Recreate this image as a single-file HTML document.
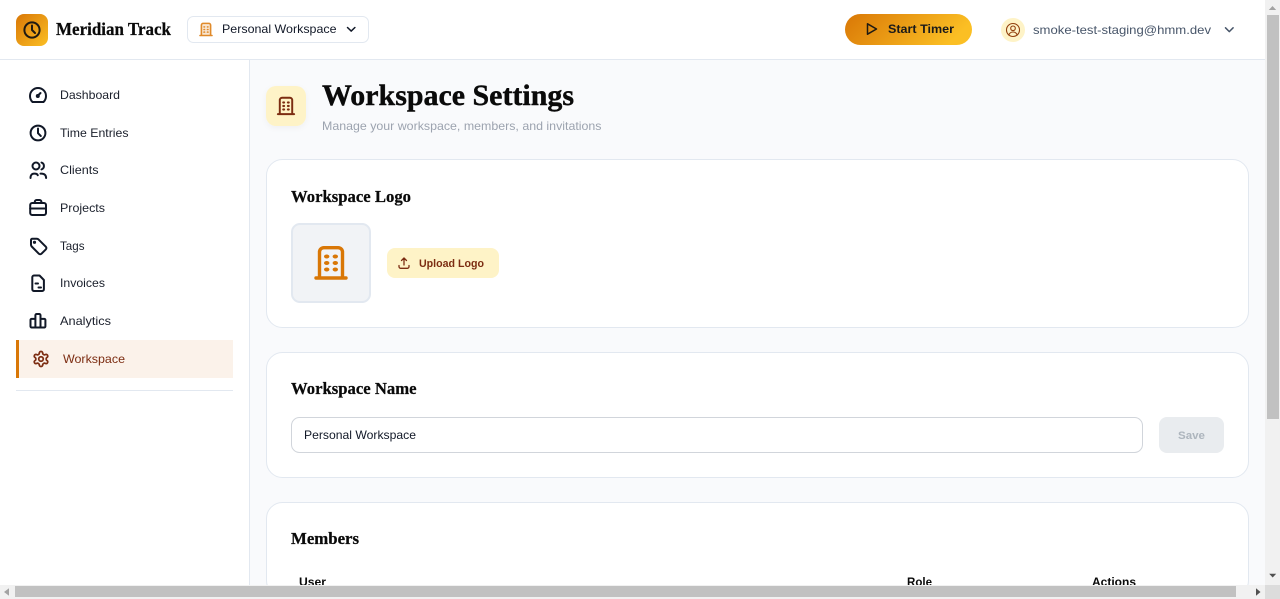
<!DOCTYPE html>
<html lang="en"><head><meta charset="utf-8"><title>Workspace Settings</title>
<style>
html,body{margin:0;padding:0;width:1280px;height:599px;overflow:hidden;background:#f9fafc}
svg{position:absolute;left:0;top:0;display:block}
.s{font-family:"Liberation Sans",sans-serif}
.f{font-family:"Liberation Serif",serif;font-weight:700;fill:#0a0a0a;stroke:#0a0a0a;stroke-width:.25px}
.n{font-size:12px;fill:#1a1f2b}
.i{fill:none;stroke:#111827;stroke-width:2;stroke-linecap:round;stroke-linejoin:round}
</style></head><body>
<svg width="1280" height="599" viewBox="0 0 1280 599" xmlns="http://www.w3.org/2000/svg">
<defs>
<linearGradient id="g" x1="0" y1="0" x2="1" y2="1"><stop offset="0" stop-color="#d97706"/><stop offset="1" stop-color="#fbbf24"/></linearGradient>
<linearGradient id="g2" x1="0" y1="0" x2="1" y2=".25"><stop offset="0" stop-color="#d97706"/><stop offset="1" stop-color="#fbbf24"/></linearGradient>
<g id="b"><path d="M-11.500 15V-11a4.300 4.300 0 0 1 4.300-4.300H7.200a4.300 4.300 0 0 1 4.300 4.300V15" style="fill:var(--f,none);stroke:currentColor;stroke-width:var(--w,3.400)"/><path d="M-15 15H15" style="fill:none;stroke:currentColor;stroke-width:var(--w,3.400);stroke-linecap:round"/><g fill="currentColor"><ellipse cx="-4.300" cy="-6.500" rx="2.700" ry="2"/><ellipse cx="4.300" cy="-6.500" rx="2.700" ry="2"/><ellipse cx="-4.300" cy="0" rx="2.700" ry="2"/><ellipse cx="4.300" cy="0" rx="2.700" ry="2"/><ellipse cx="-4.300" cy="6.500" rx="2.700" ry="2"/><ellipse cx="4.300" cy="6.500" rx="2.700" ry="2"/></g></g>
<filter id="sh" x="-30%" y="-30%" width="160%" height="160%"><feDropShadow dx="0" dy="2" stdDeviation="3" flood-color="#000" flood-opacity=".04"/></filter>
</defs>

<rect width="1280" height="599" fill="#f9fafc"/>
<!-- header -->
<rect width="1265" height="59" fill="#fff"/><rect y="59" width="1265" height="1" fill="#e2e8f0"/>
<!-- sidebar -->
<rect y="60" width="249" height="530" fill="#fff"/><rect x="249" y="60" width="1" height="530" fill="#e2e8f0"/>

<!-- logo -->
<rect x="16" y="14" width="32" height="32" rx="8" fill="url(#g)"/>
<circle cx="32" cy="30" r="7.600" class="i" style="stroke:#1f1a12"/><path d="M32 25.500V30l3 3" class="i" style="stroke:#1f1a12"/>
<text x="56" y="35" class="f" font-size="18" textLength="115" lengthAdjust="spacingAndGlyphs">Meridian Track</text>
<!-- selector -->
<rect x="187.500" y="16.500" width="181" height="26" rx="6" fill="#fff" stroke="#e2e8f0"/>
<use href="#b" transform="translate(206 29.500) scale(.4)" style="color:#e08a2a;--w:4;--f:rgba(217,119,6,.18)"/>
<text x="222" y="33" class="s" font-size="12" fill="#111827" textLength="114.500" lengthAdjust="spacingAndGlyphs">Personal Workspace</text>
<path d="M347.500 27.500l3.700 3.600 3.700-3.600" class="i" style="stroke-width:1.500"/>
<!-- timer -->
<rect x="845" y="14" width="127" height="31" rx="15.500" fill="url(#g2)"/>
<path d="M867.500 23.800v10.400l9-5.200z" class="i" style="stroke:#1f1a12;stroke-width:1.500"/>
<text x="888" y="33" class="s" font-size="12" font-weight="700" fill="#1a1a1a" textLength="66" lengthAdjust="spacingAndGlyphs">Start Timer</text>
<!-- user -->
<circle cx="1013" cy="30" r="12" fill="#fef3c7"/>
<g class="i" style="stroke:#92400e;stroke-width:1.100"><circle cx="1013" cy="30" r="6.500"/><circle cx="1013" cy="28.300" r="2.300"/><path d="M1008.800 35c.8-2 2.400-3 4.200-3s3.400 1 4.200 3"/></g>
<text x="1033" y="34" class="s" font-size="12" fill="#475569" textLength="178" lengthAdjust="spacingAndGlyphs">smoke-test-staging@hmm.dev</text>
<path d="M1225.500 27.800l3.800 3.800 3.800-3.800" class="i" style="stroke:#475569;stroke-width:1.500"/>

<!-- nav -->
<g class="i">
<path d="M32.500 102c-1.600-1.500-2.500-3.700-2.500-6 0-4.500 3.600-8 8-8s8 3.500 8 8c0 2.300-.9 4.500-2.500 6z"/><circle cx="37.800" cy="96" r="1"/><path d="M38.500 95l2-2"/>
<circle cx="38" cy="133" r="7.400"/><path d="M38 128.500v4.700l2.800 2.800"/>
<circle cx="36" cy="166" r="3.500"/><path d="M30.500 178c0-2.800 1.400-4.400 3.500-4.400h.8c1.500 0 2.600.6 3 1.600M41.500 162.600a3.600 3.600 0 0 1 0 6.800M40.500 173.600h1c2.800 0 4.600 1.600 4.600 4.400"/>
<rect x="30.200" y="203" width="15.800" height="12" rx="2"/><path d="M34.800 203v-1.200c0-1 .8-1.800 1.800-1.800h3c1 0 1.800.8 1.800 1.800v1.200M30.200 208.500h15.800"/>
<path d="M31 240c0-.8.600-1.300 1.300-1.300h4.500c.7 0 1.200.2 1.700.7l7.300 7.300c.8.800.8 1.900 0 2.700l-4.300 4.300c-.8.800-1.900.8-2.700 0l-7.100-7.200c-.5-.5-.7-1-.7-1.700z"/><circle cx="34.500" cy="242.300" r=".6" fill="#111827"/>
<path d="M39.500 275.500H34c-1 0-1.700.8-1.700 1.700v12.100c0 1 .8 1.700 1.700 1.700h8.200c1 0 1.700-.8 1.700-1.700v-9.300zM35.500 283.500h2.500M38.500 287.500h2.500"/>
<path d="M30.500 320c0-.6.500-1.100 1.100-1.100h2.700c.6 0 1.100.5 1.100 1.100v7.500h-3.800c-.6 0-1.100-.5-1.100-1.100zM35.400 315.300c0-.8.600-1.300 1.300-1.300h2.500c.7 0 1.300.5 1.300 1.300v12.200h-5.100zM40.500 320c0-.6.500-1.100 1.100-1.100h2.700c.6 0 1.100.5 1.100 1.100v6.400c0 .6-.5 1.100-1.100 1.100h-3.800z"/>
</g>
<g class="s n">
<text x="60" y="99" textLength="60" lengthAdjust="spacingAndGlyphs">Dashboard</text>
<text x="60" y="137" textLength="68.500" lengthAdjust="spacingAndGlyphs">Time Entries</text>
<text x="60" y="174" textLength="38.500" lengthAdjust="spacingAndGlyphs">Clients</text>
<text x="60" y="212" textLength="45" lengthAdjust="spacingAndGlyphs">Projects</text>
<text x="60" y="250" textLength="24.500" lengthAdjust="spacingAndGlyphs">Tags</text>
<text x="60" y="287" textLength="45" lengthAdjust="spacingAndGlyphs">Invoices</text>
<text x="60" y="325" textLength="51" lengthAdjust="spacingAndGlyphs">Analytics</text>
</g>
<rect x="16" y="340" width="217" height="38" fill="#fbf2ea"/><rect x="16" y="340" width="3" height="38" fill="#d97706"/>
<g transform="translate(32 350) scale(.75)"><path d="M12.220 2h-.44a2 2 0 0 0-2 2v.18a2 2 0 0 1-1 1.730l-.43.25a2 2 0 0 1-2 0l-.15-.08a2 2 0 0 0-2.730.73l-.22.38a2 2 0 0 0 .73 2.730l.15.1a2 2 0 0 1 1 1.720v.51a2 2 0 0 1-1 1.740l-.15.09a2 2 0 0 0-.73 2.730l.22.38a2 2 0 0 0 2.730.73l.15-.08a2 2 0 0 1 2 0l.43.25a2 2 0 0 1 1 1.730V20a2 2 0 0 0 2 2h.44a2 2 0 0 0 2-2v-.18a2 2 0 0 1 1-1.730l.43-.25a2 2 0 0 1 2 0l.15.08a2 2 0 0 0 2.730-.73l.22-.39a2 2 0 0 0-.73-2.730l-.15-.08a2 2 0 0 1-1-1.740v-.5a2 2 0 0 1 1-1.740l.15-.09a2 2 0 0 0 .73-2.730l-.22-.38a2 2 0 0 0-2.730-.73l-.15.08a2 2 0 0 1-2 0l-.43-.25a2 2 0 0 1-1-1.730V4a2 2 0 0 0-2-2z" class="i" style="stroke:#7c2d12;stroke-width:2.300"/><circle cx="12" cy="12" r="3" class="i" style="stroke:#7c2d12;stroke-width:2.300"/></g>
<text x="63" y="363" class="s" font-size="12" fill="#7c2d12" textLength="62" lengthAdjust="spacingAndGlyphs">Workspace</text>
<rect x="16" y="390" width="217" height="1" fill="#e2e8f0"/>

<!-- page head -->
<rect x="266" y="86" width="40" height="40" rx="10" fill="#fef3c7" filter="url(#sh)"/>
<use href="#b" transform="translate(286 106) scale(.54)" style="color:#7c2d12;--w:3.600"/>
<text x="322" y="105" class="f" font-size="30" textLength="252" lengthAdjust="spacingAndGlyphs" style="stroke-width:.4px">Workspace Settings</text>
<text x="322" y="130" class="s" font-size="12" fill="#9ca3af" textLength="279.500" lengthAdjust="spacingAndGlyphs">Manage your workspace, members, and invitations</text>

<!-- cards -->
<rect x="266.500" y="159.500" width="982" height="168" rx="16" fill="#fff" stroke="#e2e8f0"/>
<text x="291" y="202" class="f" font-size="17" textLength="120" lengthAdjust="spacingAndGlyphs">Workspace Logo</text>
<rect x="292" y="224" width="78" height="78" rx="8" fill="#f1f3f6" stroke="#e2e8f0" stroke-width="2"/>
<use href="#b" transform="translate(331 263)" style="color:#d97706"/>
<rect x="387" y="248" width="112" height="30" rx="8" fill="#fef3c7"/>
<path d="M399 265.500v1.300c0 .8.700 1.500 1.500 1.500h7c.8 0 1.500-.7 1.500-1.500v-1.300M404 265V258.300M401.500 260.500l2.500-2.500 2.500 2.500" class="i" style="stroke:#7c2d12;stroke-width:1.300"/>
<text x="419" y="267" class="s" font-size="11" font-weight="700" fill="#7c2d12" textLength="65" lengthAdjust="spacingAndGlyphs">Upload Logo</text>

<rect x="266.500" y="352.500" width="982" height="125" rx="16" fill="#fff" stroke="#e2e8f0"/>
<text x="291" y="394" class="f" font-size="17" textLength="125.500" lengthAdjust="spacingAndGlyphs">Workspace Name</text>
<rect x="291.500" y="417.500" width="851" height="35" rx="8" fill="#fff" stroke="#d1d5db"/>
<text x="304" y="439" class="s" font-size="12" fill="#111827" textLength="112" lengthAdjust="spacingAndGlyphs">Personal Workspace</text>
<rect x="1159" y="417" width="65" height="36" rx="8" fill="#e9ecef"/>
<text x="1178" y="439" class="s" font-size="11" font-weight="700" fill="#adb5bd" textLength="27" lengthAdjust="spacingAndGlyphs">Save</text>

<rect x="266.500" y="502.500" width="982" height="94" rx="16" fill="#fff" stroke="#e2e8f0"/>
<text x="291" y="544" class="f" font-size="17" textLength="68" lengthAdjust="spacingAndGlyphs">Members</text>
<g class="s" font-size="12" font-weight="700" fill="#0a0a0a">
<text x="299" y="586" textLength="27" lengthAdjust="spacingAndGlyphs">User</text>
<text x="907" y="586" textLength="25" lengthAdjust="spacingAndGlyphs">Role</text>
<text x="1092" y="586" textLength="44" lengthAdjust="spacingAndGlyphs">Actions</text>
</g>

<!-- scrollbars -->
<rect x="1265" width="15" height="585" fill="#f1f1f1"/>
<rect x="1267" y="15" width="12" height="404" fill="#c1c1c1"/>
<path d="M1272.500 6l3.700 4h-7.400z" fill="#a3a3a3"/>
<path d="M1272.700 577.500l-3.500-3.700h7z" fill="#505050"/>
<rect y="585" width="1265" height="14" fill="#f1f1f1"/>
<rect x="15" y="586" width="1221" height="11" fill="#c1c1c1"/>
<path d="M4 592l5-3.700v7.400z" fill="#a3a3a3"/>
<path d="M1260.500 592l-4.500-3.700v7.400z" fill="#505050"/>
<rect x="1265" y="585" width="15" height="14" fill="#dcdcdc"/>
</svg>
</body></html>
